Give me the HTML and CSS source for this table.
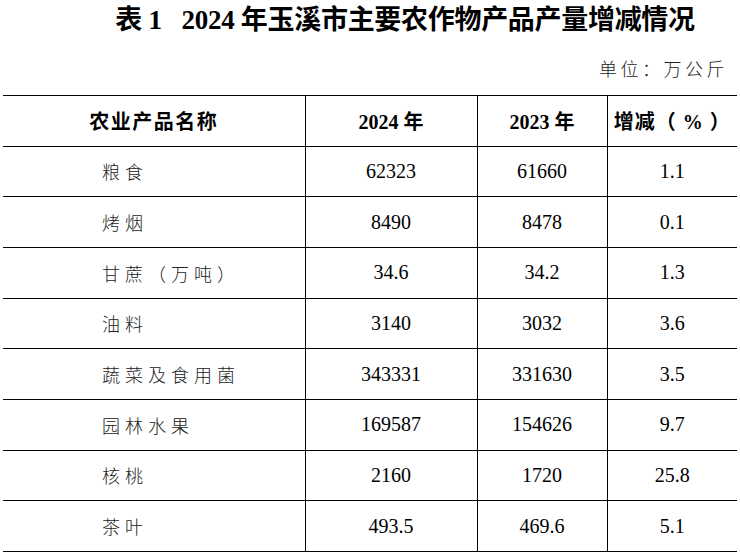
FILE: index.html
```html
<!DOCTYPE html>
<html lang="zh-CN">
<head>
<meta charset="utf-8">
<link rel="stylesheet" href="styles.css">
</head>
<body>
<div class="page">
  <h1 class="title"><span class="tno">表 1</span><span class="tmain">2024 年玉溪市主要农作物产品产量增减情况</span></h1>
  <div class="unit">单位：万公斤</div>
  <table class="tbl">
    <colgroup>
      <col class="c1"><col class="c2"><col class="c3"><col class="c4">
    </colgroup>
    <thead>
      <tr>
        <th class="hname">农业产品名称</th>
        <th>2024 年</th>
        <th>2023 年</th>
        <th class="hpct">增减（ % ）</th>
      </tr>
    </thead>
    <tbody>
      <tr><td class="name">粮食</td><td>62323</td><td>61660</td><td>1.1</td></tr>
      <tr><td class="name">烤烟</td><td>8490</td><td>8478</td><td>0.1</td></tr>
      <tr><td class="name">甘蔗（万吨）</td><td>34.6</td><td>34.2</td><td>1.3</td></tr>
      <tr><td class="name">油料</td><td>3140</td><td>3032</td><td>3.6</td></tr>
      <tr><td class="name">蔬菜及食用菌</td><td>343331</td><td>331630</td><td>3.5</td></tr>
      <tr><td class="name">园林水果</td><td>169587</td><td>154626</td><td>9.7</td></tr>
      <tr><td class="name">核桃</td><td>2160</td><td>1720</td><td>25.8</td></tr>
      <tr><td class="name">茶叶</td><td>493.5</td><td>469.6</td><td>5.1</td></tr>
    </tbody>
  </table>
</div>
</body>
</html>
```
FILE: styles.css
```css
html, body {
  margin: 0;
  padding: 0;
  background: #fff;
}
.page {
  width: 740px;
  padding-top: 3px;
  font-family: "Liberation Serif", "Noto Sans CJK SC", serif;
  color: #000;
}
.title {
  margin: 0;
  padding-left: 70px;
  text-align: center;
  font-size: 27px;
  line-height: 34px;
  font-weight: bold;
  font-family: "Liberation Serif", "Noto Sans CJK SC", serif;
  letter-spacing: -0.3px;
}
.tno {
  margin-right: 20px;
}
.unit {
  margin-top: 19px;
  padding-right: 12px;
  text-align: right;
  font-family: "Noto Sans CJK SC", sans-serif;
  font-weight: 300;
  font-size: 18px;
  line-height: 24px;
  letter-spacing: 3.5px;
  color: #222;
}
.tbl {
  margin: 15px 0 0 3px;
  width: 734px;
  border-collapse: collapse;
  table-layout: fixed;
}
.c1 { width: 302px; }
.c2 { width: 172px; }
.c3 { width: 130px; }
.c4 { width: 130px; }
.tbl th, .tbl td {
  border: 1px solid #000;
  height: 49.67px;
  padding: 0;
  text-align: center;
  vertical-align: middle;
  font-size: 20px;
}
.tbl tr > :first-child { border-left: none; }
.tbl tr > :last-child { border-right: none; }
.tbl th {
  font-weight: bold;
  font-family: "Liberation Serif", "Noto Sans CJK SC", serif;
}
.tbl th.hname {
  font-family: "Noto Sans CJK SC", sans-serif;
  font-size: 20px;
  letter-spacing: 1.5px;
}
.tbl th.hpct {
  font-size: 20px;
  letter-spacing: 1px;
}
.tbl td.name {
  text-align: left;
  padding-left: 99px;
  font-family: "Noto Sans CJK SC", sans-serif;
  font-weight: 300;
  font-size: 18px;
  letter-spacing: 5px;
  color: #222;
}
```
